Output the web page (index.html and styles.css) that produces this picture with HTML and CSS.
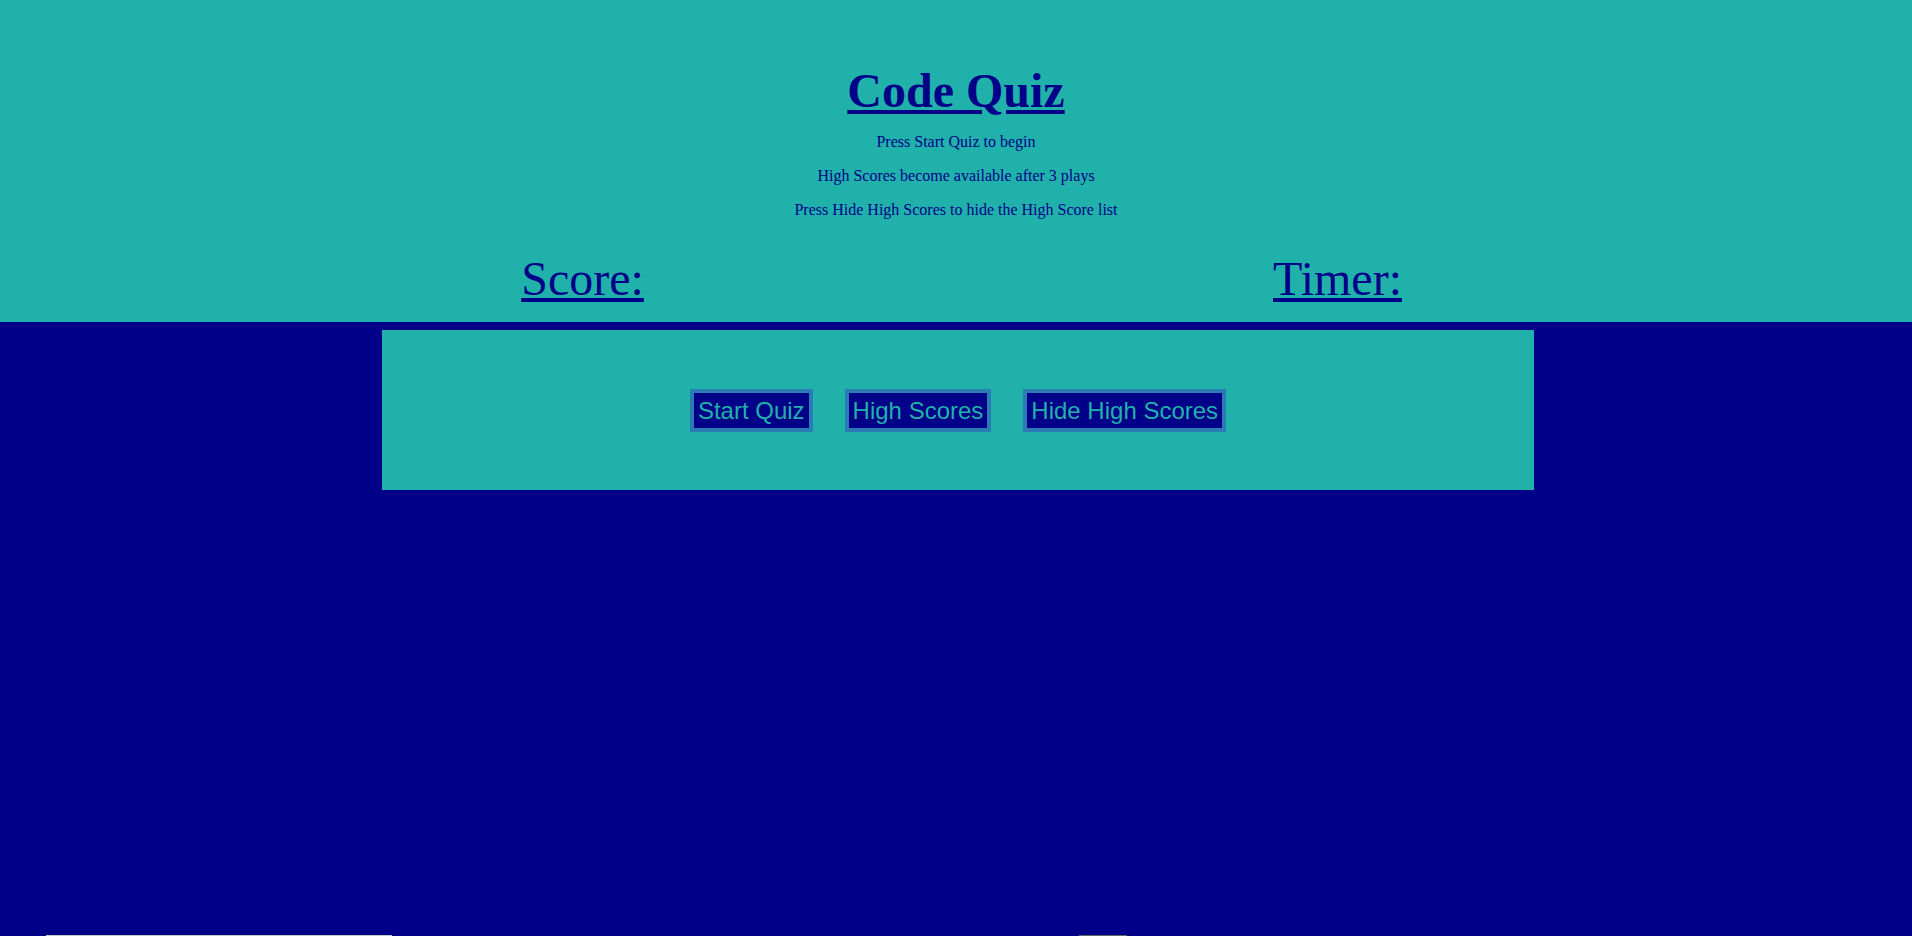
FILE: index.html
```html
<!DOCTYPE html>
<html lang="en">
<head>
<meta charset="utf-8">
<title>Code Quiz</title>
<link rel="stylesheet" href="styles.css">
</head>
<body>
<header class="header">
  <h1 class="title"><a class="link" href="#">Code Quiz</a></h1>
  <p class="note">Press Start Quiz to begin</p>
  <p class="note">High Scores become available after 3 plays</p>
  <p class="note">Press Hide High Scores to hide the High Score list</p>
  <div class="stats">
    <div class="stat"><a class="link" href="#">Score:</a></div>
    <div class="stat"><a class="link" href="#">Timer:</a></div>
  </div>
</header>
<main class="panel">
  <div class="controls">
    <button class="btn">Start Quiz</button>
    <button class="btn">High Scores</button>
    <button class="btn">Hide High Scores</button>
  </div>
</main>
<div class="entry">
  <input class="entry-input" type="text" aria-label="Initials">
  <button class="entry-btn" aria-label="Submit"></button>
</div>
</body>
</html>
```
FILE: styles.css
```css
html {
  overflow: hidden;
}
body {
  margin: 0;
  background: #000088;
  color: #000088;
  font-family: "Liberation Serif", "Times New Roman", serif;
}
.header {
  background: #20b2aa;
  padding: 63px 0 15px;
  text-align: center;
}
.link {
  color: #000088;
  text-decoration: underline;
}
.title {
  margin: 0 0 14px;
  font-size: 48px;
  line-height: 56px;
  font-weight: bold;
}
.note {
  margin: 0 0 16px;
  font-size: 16px;
  line-height: 18px;
}
.note:last-of-type {
  margin-bottom: 32px;
}
.stats {
  display: flex;
  width: 1510px;
  margin-left: 205px;
}
.stat {
  flex: 1;
  font-size: 48px;
  line-height: 56px;
  text-align: center;
}
.panel {
  background: #20b2aa;
  width: 1152px;
  height: 160px;
  margin: 8px 0 0 382px;
  display: flex;
  align-items: center;
  justify-content: center;
}
.controls {
  display: flex;
  gap: 32px;
}
.btn {
  background: #000088;
  color: #20b2aa;
  border: 4px solid #2b7bb5;
  font-family: "Liberation Sans", Arial, sans-serif;
  font-size: 24px;
  line-height: 27px;
  padding: 4px 4px;
  margin: 0;
}
.entry {
  display: flex;
  padding-left: 46px;
  margin-top: 445px;
}
.entry-input {
  width: 344px;
  height: 20px;
  border: 1px solid #c8c8c8;
  background: #ffffff;
  padding: 0;
  margin: 0;
}
.entry-btn {
  width: 48px;
  height: 20px;
  margin-left: 687px;
  border: 1px solid #666666;
  background: #efefef;
  padding: 0;
}
```
